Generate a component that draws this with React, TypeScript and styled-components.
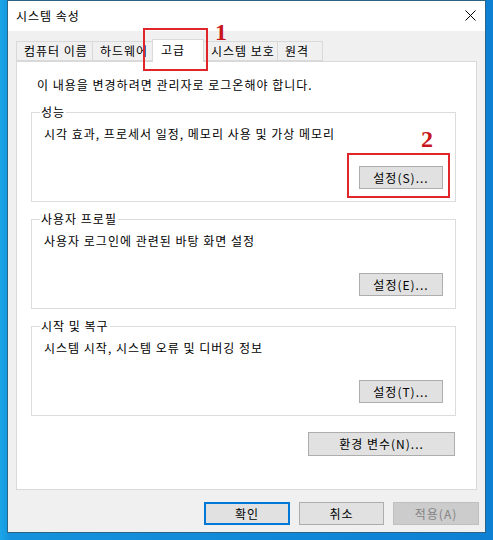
import React from "react"
import { styled, createGlobalStyle } from "styled-components"

const GlobalStyle = createGlobalStyle`
  html, body {
    margin: 0;
    padding: 0;
  }
  body {
    font-family: "Noto Sans CJK KR", "Noto Sans", sans-serif;
    font-size: 12px;
    letter-spacing: 1px;
    color: #000;
  }
`

const Desktop = styled.div`
  width: 493px;
  height: 540px;
  padding-left: 7px;
  box-sizing: border-box;
  overflow: hidden;
  background: linear-gradient(90deg, #1aa6e8 0%, #1592dc 2%, #0d80d4 100%);
`

const Window = styled.div`
  position: relative;
  width: 479px;
  height: 533px;
  box-sizing: border-box;
  border: 1px solid #2a6585;
  display: flex;
  flex-direction: column;
  background: #f0f0f0;
`

const TitleBar = styled.div`
  height: 30px;
  flex-shrink: 0;
  background: #fff;
  display: flex;
  align-items: center;
  justify-content: space-between;
  padding: 0 9px 0 8px;
`

const Title = styled.span`
  line-height: 16px;
  margin-top: -1px;
`

const CloseIcon = styled.svg`
  width: 11px;
  height: 11px;
  margin-top: -2px;
`

const Body = styled.div`
  flex: 1;
  display: flex;
  flex-direction: column;
  padding: 8px 6px 0 8px;
`

const TabStrip = styled.div`
  display: flex;
  align-items: flex-end;
  height: 22px;
`

const Tab = styled.div<{ $w: number; $active?: boolean }>`
  position: relative;
  box-sizing: border-box;
  width: ${(p) => p.$w}px;
  height: ${(p) => (p.$active ? 23 : 20)}px;
  margin-bottom: ${(p) => (p.$active ? -1 : 0)}px;
  margin-left: -1px;
  z-index: ${(p) => (p.$active ? 2 : 0)};
  border: 1px solid #d9d9d9;
  border-bottom: ${(p) => (p.$active ? "none" : "1px solid #d9d9d9")};
  background: ${(p) => (p.$active ? "#fff" : "#f0f0f0")};
  padding: ${(p) => (p.$active ? "2px 0 0 8px" : "1px 0 0 7px")};
  line-height: 16px;
  white-space: nowrap;
  overflow: hidden;
  &:first-child {
    margin-left: 0;
  }
`

const Panel = styled.div`
  position: relative;
  z-index: 1;
  width: 461px;
  height: 429px;
  box-sizing: border-box;
  border: 1px solid #d9d9d9;
  background: #fff;
  padding: 15px 20px 0 14px;
  display: flex;
  flex-direction: column;
`

const Notice = styled.div`
  line-height: 16px;
  margin-left: 6px;
`

const Group = styled.div<{ $top: number }>`
  margin-top: ${(p) => p.$top}px;
  border: 1px solid #dcdcdc;
  height: 90px;
  box-sizing: border-box;
  display: flex;
  flex-direction: column;
`

const Legend = styled.div`
  align-self: flex-start;
  margin: -9px 0 0 8px;
  padding: 0 1px;
  background: #fff;
  line-height: 16px;
`

const GroupText = styled.div`
  margin: 6px 0 0 12px;
  line-height: 16px;
`

const ButtonRow = styled.div<{ $top: number; $right: number }>`
  display: flex;
  justify-content: flex-end;
  gap: 9px;
  margin-top: ${(p) => p.$top}px;
  padding-right: ${(p) => p.$right}px;
`

const Button = styled.button<{ $w: number; $h?: number; $default?: boolean }>`
  width: ${(p) => p.$w}px;
  height: ${(p) => p.$h ?? 23}px;
  box-sizing: border-box;
  padding: 0;
  font-family: inherit;
  font-size: 12px;
  letter-spacing: 1px;
  line-height: 16px;
  color: #000;
  background: #e1e1e1;
  border: 1px solid ${(p) => (p.$default ? "#0078d7" : "#adadad")};
  box-shadow: ${(p) => (p.$default ? "inset 0 0 0 1px #0078d7" : "none")};
  &:disabled {
    background: #cccccc;
    border-color: #bfbfbf;
    color: #838383;
  }
`

const FooterRow = styled.div`
  display: flex;
  justify-content: flex-end;
  gap: 9px;
  margin-top: 12px;
`

const Mark = styled.div<{ $x: number; $y: number; $w: number; $h: number }>`
  position: absolute;
  left: ${(p) => p.$x}px;
  top: ${(p) => p.$y}px;
  width: ${(p) => p.$w}px;
  height: ${(p) => p.$h}px;
  box-sizing: border-box;
  border: 2px solid #e0262b;
  z-index: 5;
  pointer-events: none;
`

const MarkNumber = styled.div<{ $x: number; $y: number }>`
  position: absolute;
  left: ${(p) => p.$x}px;
  top: ${(p) => p.$y}px;
  font-family: "Liberation Serif", "DejaVu Serif", serif;
  font-weight: bold;
  font-size: 24px;
  line-height: 18px;
  letter-spacing: 0;
  color: #c8161c;
  z-index: 5;
`

const tabs = [
  { label: "컴퓨터 이름", w: 77 },
  { label: "하드웨어", w: 61 },
  { label: "고급", w: 52, active: true },
  { label: "시스템 보호", w: 75 },
  { label: "원격", w: 46 },
]

const groups = [
  { title: "성능", text: "시각 효과, 프로세서 일정, 메모리 사용 및 가상 메모리", btn: "설정(S)...", top: 19 },
  { title: "사용자 프로필", text: "사용자 로그인에 관련된 바탕 화면 설정", btn: "설정(E)...", top: 17 },
  { title: "시작 및 복구", text: "시스템 시작, 시스템 오류 및 디버깅 정보", btn: "설정(T)...", top: 17 },
]

export default function App() {
  return (
    <Desktop>
      <GlobalStyle />
      <Window>
        <TitleBar>
          <Title>시스템 속성</Title>
          <CloseIcon viewBox="0 0 11 11">
            <path d="M0.5 0.5 L10.5 10.5 M10.5 0.5 L0.5 10.5" stroke="#000" strokeWidth="1" fill="none" />
          </CloseIcon>
        </TitleBar>
        <Body>
          <TabStrip>
            {tabs.map((t) => (
              <Tab key={t.label} $w={t.w} $active={t.active}>
                {t.label}
              </Tab>
            ))}
          </TabStrip>
          <Panel>
            <Notice>이 내용을 변경하려면 관리자로 로그온해야 합니다.</Notice>
            {groups.map((g) => (
              <Group key={g.title} $top={g.top}>
                <Legend>{g.title}</Legend>
                <GroupText>{g.text}</GroupText>
                <ButtonRow $top={24} $right={12}>
                  <Button $w={84}>{g.btn}</Button>
                </ButtonRow>
              </Group>
            ))}
            <ButtonRow $top={16} $right={1}>
              <Button $w={147} $h={24}>환경 변수(N)...</Button>
            </ButtonRow>
          </Panel>
          <FooterRow>
            <Button $w={86} $default>확인</Button>
            <Button $w={85}>취소</Button>
            <Button $w={86} disabled>적용(A)</Button>
          </FooterRow>
        </Body>
        <Mark $x={135} $y={27} $w={65} $h={43} />
        <MarkNumber $x={207} $y={22}>1</MarkNumber>
        <Mark $x={339} $y={152} $w={103} $h={45} />
        <MarkNumber $x={413} $y={129}>2</MarkNumber>
      </Window>
    </Desktop>
  )
}
